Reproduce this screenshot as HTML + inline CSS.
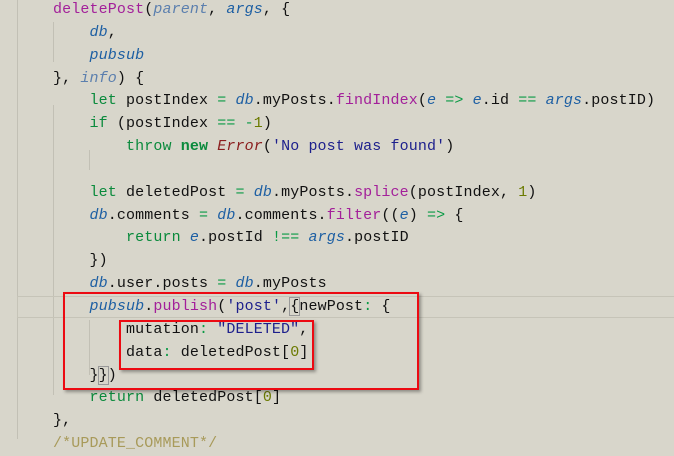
<!DOCTYPE html>
<html><head><meta charset="utf-8"><style>
html,body{margin:0;padding:0;width:674px;height:439px;overflow:hidden;background:#d8d6cb;}
.g{position:absolute;width:1px;background:#c2c0b5;}
.cur{position:absolute;left:17px;right:0;top:296px;height:22px;border:1px solid #c6c4b8;border-right:none;box-sizing:border-box;}
pre{position:absolute;left:53px;top:-1px;margin:0;font:15px/22.85px "Liberation Mono",monospace;letter-spacing:0.12px;color:#111;}
.f{color:#a3209a}.p{color:#1d5fa3;font-style:italic}.pp{color:#5b7fae;font-style:italic}
.k{color:#0a8a3c}.kb{color:#0a8a3c;font-weight:bold}.o{color:#0a9a45}.n{color:#6b7a00}
.s{color:#1c1f8c}.e{color:#8a1c1c;font-style:italic}.c{color:#a89a5a}
.box{position:absolute;border:2px solid #ec0a12;box-shadow:2px 2px 3px rgba(0,0,0,.35);}
.br{outline:1px solid #999;}
</style></head><body>
<div class="g" style="left:17px;top:0;height:439px"></div>
<div class="g" style="left:53px;top:22px;height:40px"></div>
<div class="g" style="left:53px;top:105px;height:290px"></div>
<div class="g" style="left:89px;top:150px;height:20px"></div>
<div class="g" style="left:89px;top:320px;height:55px"></div>
<div class="cur"></div>
<pre><span class="f">deletePost</span>(<span class="pp">parent</span>, <span class="p">args</span>, {
    <span class="p">db</span>,
    <span class="p">pubsub</span>
}, <span class="pp">info</span>) {
    <span class="k">let</span> postIndex <span class="o">=</span> <span class="p">db</span>.myPosts.<span class="f">findIndex</span>(<span class="p">e</span> <span class="o">=&gt;</span> <span class="p">e</span>.id <span class="o">==</span> <span class="p">args</span>.postID)
    <span class="k">if</span> (postIndex <span class="o">==</span> <span class="o">-</span><span class="n">1</span>)
        <span class="k">throw</span> <span class="kb">new</span> <span class="e">Error</span>(<span class="s">'No post was found'</span>)

    <span class="k">let</span> deletedPost <span class="o">=</span> <span class="p">db</span>.myPosts.<span class="f">splice</span>(postIndex, <span class="n">1</span>)
    <span class="p">db</span>.comments <span class="o">=</span> <span class="p">db</span>.comments.<span class="f">filter</span>((<span class="p">e</span>) <span class="o">=&gt;</span> {
        <span class="k">return</span> <span class="p">e</span>.postId <span class="o">!==</span> <span class="p">args</span>.postID
    })
    <span class="p">db</span>.user.posts <span class="o">=</span> <span class="p">db</span>.myPosts
    <span class="p">pubsub</span>.<span class="f">publish</span>(<span class="s">'post'</span>,<span class="br">{</span>newPost<span class="o">:</span> {
        mutation<span class="o">:</span> <span class="s">"DELETED"</span>,
        data<span class="o">:</span> deletedPost[<span class="n">0</span>]
    }<span class="br">}</span>)
    <span class="k">return</span> deletedPost[<span class="n">0</span>]
},
<span class="c">/*UPDATE_COMMENT*/</span></pre>
<div class="box" style="left:63px;top:292px;width:352px;height:94px"></div>
<div class="box" style="left:119px;top:320px;width:191px;height:46px"></div>
</body></html>
